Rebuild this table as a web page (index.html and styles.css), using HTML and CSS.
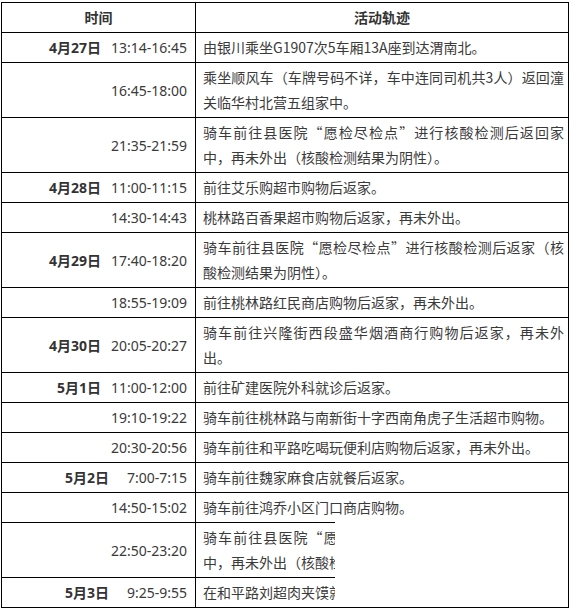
FILE: index.html
```html
<!DOCTYPE html>
<html lang="zh-CN">
<head>
<meta charset="utf-8">
<link rel="stylesheet" href="styles.css">
</head>
<body>
<div class="page">
<table class="track">
  <colgroup><col class="c-time"><col class="c-act"></colgroup>
  <thead>
    <tr><th>时间</th><th>活动轨迹</th></tr>
  </thead>
  <tbody>
    <tr><td class="time"><b class="date">4月27日</b>13:14-16:45</td><td class="act">由银川乘坐G1907次5车厢13A座到达渭南北。</td></tr>
    <tr><td class="time">16:45-18:00</td><td class="act">乘坐顺风车（车牌号码不详，车中连同司机共3人）返回潼关临华村北营五组家中。</td></tr>
    <tr><td class="time">21:35-21:59</td><td class="act">骑车前往县医院“愿检尽检点”进行核酸检测后返回家中，再未外出（核酸检测结果为阴性）。</td></tr>
    <tr><td class="time"><b class="date">4月28日</b>11:00-11:15</td><td class="act">前往艾乐购超市购物后返家。</td></tr>
    <tr><td class="time">14:30-14:43</td><td class="act">桃林路百香果超市购物后返家，再未外出。</td></tr>
    <tr><td class="time"><b class="date">4月29日</b>17:40-18:20</td><td class="act">骑车前往县医院“愿检尽检点”进行核酸检测后返家（核酸检测结果为阴性）。</td></tr>
    <tr><td class="time">18:55-19:09</td><td class="act">前往桃林路红民商店购物后返家，再未外出。</td></tr>
    <tr><td class="time"><b class="date">4月30日</b>20:05-20:27</td><td class="act">骑车前往兴隆街西段盛华烟酒商行购物后返家，再未外出。</td></tr>
    <tr><td class="time"><b class="date">5月1日</b>11:00-12:00</td><td class="act">前往矿建医院外科就诊后返家。</td></tr>
    <tr><td class="time">19:10-19:22</td><td class="act">骑车前往桃林路与南新街十字西南角虎子生活超市购物。</td></tr>
    <tr><td class="time">20:30-20:56</td><td class="act">骑车前往和平路吃喝玩便利店购物后返家，再未外出。</td></tr>
    <tr><td class="time"><b class="date wide">5月2日</b>7:00-7:15</td><td class="act">骑车前往魏家麻食店就餐后返家。</td></tr>
    <tr><td class="time">14:50-15:02</td><td class="act">骑车前往鸿乔小区门口商店购物。</td></tr>
    <tr><td class="time">22:50-23:20</td><td class="act">骑车前往县医院“愿检尽检点”进行核酸检测后返回家中，再未外出（核酸检测结果为阴性）。</td></tr>
    <tr><td class="time"><b class="date wide">5月3日</b>9:25-9:55</td><td class="act">在和平路刘超肉夹馍就餐后返家。</td></tr>
  </tbody>
</table>
<div class="mask"></div>
</div>
</body>
</html>
```
FILE: styles.css
```css
html, body {
  margin: 0;
  padding: 0;
  background: #fff;
}
.page {
  position: relative;
  width: 570px;
  height: 610px;
  padding: 2px 0 0 1px;
  box-sizing: border-box;
  font-family: "Noto Sans CJK SC", "Noto Sans", sans-serif;
  font-size: 14px;
  color: #3a3a3a;
}
.track {
  border-collapse: collapse;
  table-layout: fixed;
  width: 568px;
}
.c-time { width: 194px; }
.track th,
.track td {
  border: 1px solid #000;
  line-height: 25px;
  padding: 2px 0;
  vertical-align: middle;
}
.track th {
  font-weight: bold;
  text-align: center;
  color: #333;
}
.time {
  text-align: right;
  padding-right: 8px !important;
  white-space: nowrap;
  font-family: "Noto Sans", "Noto Sans CJK SC", sans-serif;
}
.date {
  font-weight: bold;
  color: #333;
  margin-right: 10px;
}
.date.wide {
  margin-right: 18px;
}
.act {
  text-align: justify;
  padding-left: 7px !important;
  padding-right: 4px !important;
}
.mask {
  position: absolute;
  left: 335px;
  top: 518px;
  width: 233px;
  height: 86px;
  background: #fff;
}
```
